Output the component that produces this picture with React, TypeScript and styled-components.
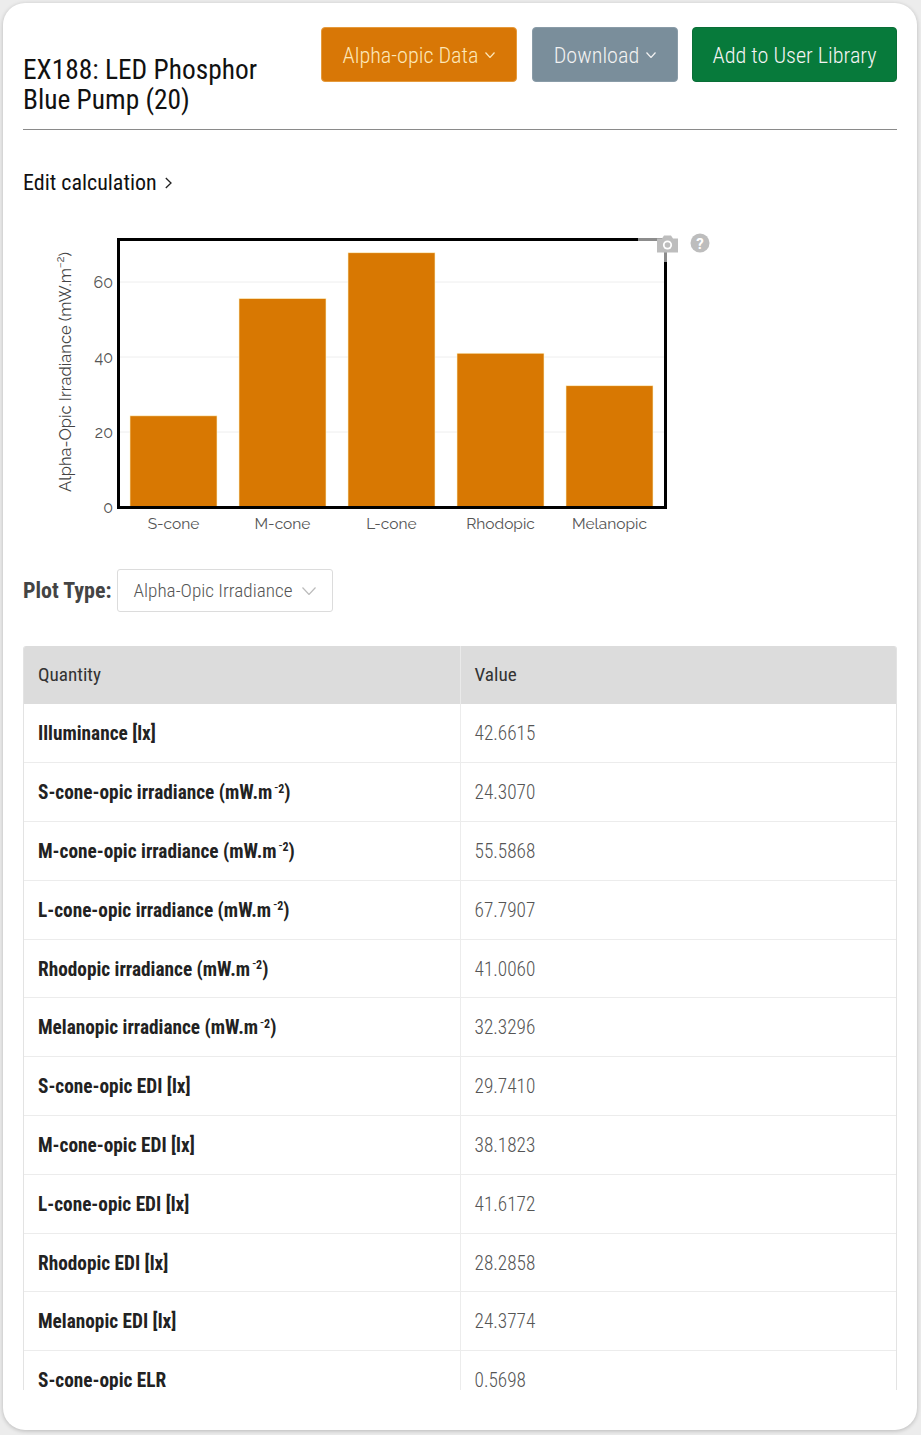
import React from "react";
import styled, { createGlobalStyle } from "styled-components";

const COND = `"Roboto Condensed", Roboto, "Liberation Sans Narrow", sans-serif`;
const CHART = `Raleway, Lato, "Open Sans", sans-serif`;

const Global = createGlobalStyle`
  html, body { margin: 0; padding: 0; background: #ececec; }
  body { font-family: ${COND}; }
  * { box-sizing: border-box; }
`;

const Card = styled.div`
  margin: 3px 4px 5px 3px;
  background: #fff;
  border-radius: 22px;
  box-shadow: 0 1px 4px rgba(0, 0, 0, 0.22);
  padding: 24px 20px 40px;
`;

const Header = styled.div`
  display: flex;
  justify-content: space-between;
  align-items: flex-start;
  height: 88px;
`;

const Title = styled.h1`
  margin: 28px 0 0;
  font-size: 27.4px;
  line-height: 30px;
  font-weight: 400;
  color: #111;
  width: 275px;
`;

const Buttons = styled.div`
  display: flex;
  gap: 14px;
`;

const Btn = styled.button<{ $bg: string; $fg: string; $w: number; $edge: string; $lead?: number }>`
  width: ${(p) => p.$w}px;
  height: 55px;
  margin-left: ${(p) => p.$lead ?? 0}px;
  border-radius: 4px;
  border: 1px solid ${(p) => p.$edge};
  background: ${(p) => p.$bg};
  color: ${(p) => p.$fg};
  font-family: ${COND};
  font-weight: 300;
  font-size: 22.2px;
  display: flex;
  align-items: center;
  justify-content: center;
  gap: 7px;
  padding: 0;
  cursor: pointer;
`;

const Divider = styled.hr`
  margin: 14px 0 0;
  border: 0;
  border-top: 1px solid #8a8a8a;
`;

const EditLink = styled.div`
  margin-top: 41px;
  font-size: 22px;
  line-height: 24px;
  color: #111;
  display: flex;
  align-items: center;
  gap: 8px;
`;

const ChartSvg = styled.svg`
  display: block;
  margin-top: 30px;
`;

const PlotRow = styled.div`
  margin-top: 24px;
  display: flex;
  align-items: center;
  gap: 6px;
`;

const PlotLabel = styled.span`
  font-weight: 700;
  font-size: 22px;
  color: #444;
`;

const Select = styled.div`
  width: 216px;
  height: 43px;
  border: 1px solid #dcdcdc;
  border-radius: 3px;
  display: flex;
  align-items: center;
  justify-content: space-between;
  padding: 0 16px 0 15px;
  font-size: 19.2px;
  font-weight: 300;
  color: #555;
`;

const TableWrap = styled.div`
  margin-top: 34px;
  height: 744px;
  overflow: hidden;
  border-left: 1px solid #e3e3e3;
  border-right: 1px solid #e3e3e3;
  border-radius: 3px 3px 0 0;
`;

const Table = styled.table`
  width: 100%;
  border-collapse: collapse;
  table-layout: fixed;
`;

const Th = styled.th`
  background: #dcdcdc;
  height: 58px;
  padding: 0 14px 2px;
  text-align: left;
  font-weight: 400;
  font-size: 19.2px;
  color: #333;
  & + & { border-left: 1px solid #eaeaea; }
`;

const Td = styled.td<{ $bold?: boolean }>`
  height: 58.8px;
  padding: 1px 14px 0;
  border-bottom: 1px solid #ececec;
  font-size: 19.3px;
  font-weight: ${(p) => (p.$bold ? 700 : 300)};
  color: ${(p) => (p.$bold ? "#222" : "#555")};
  & + & { border-left: 1px solid #ececec; }
`;

const Chevron = ({ color, w = 10, h = 6 }: { color: string; w?: number; h?: number }) => (
  <svg width={w} height={h} viewBox={`0 0 ${w} ${h}`}>
    <polyline points={`0.5,0.5 ${w / 2},${h - 0.5} ${w - 0.5},0.5`} fill="none" stroke={color} strokeWidth="1.2" />
  </svg>
);

const RightChevron = () => (
  <svg width="7" height="12" viewBox="0 0 7 12">
    <polyline points="0.8,1 6,6 0.8,11" fill="none" stroke="#222" strokeWidth="1.3" />
  </svg>
);

const bars = [
  { name: "S-cone", v: 24.307 },
  { name: "M-cone", v: 55.5868 },
  { name: "L-cone", v: 67.7907 },
  { name: "Rhodopic", v: 41.006 },
  { name: "Melanopic", v: 32.3296 },
];

const Y0 = 282;
const K = 3.75;

const Chart = () => (
  <ChartSvg width="700" height="320" viewBox="0 0 700 320">
    {[20, 40, 60].map((t) => (
      <line key={t} x1="96" x2="642" y1={Y0 - t * K} y2={Y0 - t * K} stroke="#eeeeee" strokeWidth="1" />
    ))}
    {bars.map((b, i) => {
      const x = 107 + i * 109;
      const h = b.v * K;
      return (
        <g key={b.name}>
          <rect x={x} y={Y0 - h} width="87" height={h} fill="#d87802" stroke="#fff3c8" strokeWidth="0.6" />
          <text x={x + 43.5} y="304" textAnchor="middle" fontFamily={CHART} fontWeight="400" fontSize="15.5" fill="#555">
            {b.name}
          </text>
        </g>
      );
    })}
    {[0, 20, 40, 60].map((t) => (
      <text key={t} x="90" y={Y0 - t * K + 5.5} textAnchor="end" fontFamily={CHART} fontWeight="400" fontSize="16" fill="#555">
        {t}
      </text>
    ))}
    <text
      transform="translate(48 147) rotate(-90)"
      textAnchor="middle"
      fontFamily={CHART}
      fontWeight="400"
      fontSize="16.5"
      fill="#444"
    >
      Alpha-Opic Irradiance (mW.m
      <tspan dy="-7" fontSize="11">−2</tspan>
      <tspan dy="7">)</tspan>
    </text>
    <rect x="95.5" y="14.5" width="547" height="268" fill="none" stroke="#000" strokeWidth="3" />
    <rect x="615" y="0" width="100" height="37" fill="rgba(255,255,255,0.55)" />
    <g fill="#bdbdbd">
      <path d="M634 13.5 h5 l2 -3 h7 l2 3 h5 v14 h-21 z" />
      <circle cx="644.5" cy="20" r="4.6" fill="#fff" />
      <circle cx="644.5" cy="20" r="2.8" fill="#bdbdbd" />
      <circle cx="677" cy="18" r="9.5" />
    </g>
    <text x="677" y="23.5" textAnchor="middle" fontFamily="Roboto, sans-serif" fontWeight="700" fontSize="15" fill="#fff">
      ?
    </text>
  </ChartSvg>
);

const Sup = styled.sup`
  font-size: 0.62em;
  vertical-align: 0.55em;
  line-height: 0;
  margin-left: 2px;
`;

const unit = (
  <>
    (mW.m<Sup>⁻2</Sup>)
  </>
);

const rows: { q: React.ReactNode; v: string }[] = [
  { q: "Illuminance [lx]", v: "42.6615" },
  { q: <>S-cone-opic irradiance {unit}</>, v: "24.3070" },
  { q: <>M-cone-opic irradiance {unit}</>, v: "55.5868" },
  { q: <>L-cone-opic irradiance {unit}</>, v: "67.7907" },
  { q: <>Rhodopic irradiance {unit}</>, v: "41.0060" },
  { q: <>Melanopic irradiance {unit}</>, v: "32.3296" },
  { q: "S-cone-opic EDI [lx]", v: "29.7410" },
  { q: "M-cone-opic EDI [lx]", v: "38.1823" },
  { q: "L-cone-opic EDI [lx]", v: "41.6172" },
  { q: "Rhodopic EDI [lx]", v: "28.2858" },
  { q: "Melanopic EDI [lx]", v: "24.3774" },
  { q: "S-cone-opic ELR", v: "0.5698" },
];

export default function App() {
  return (
    <>
      <Global />
      <Card>
        <Header>
          <Title>EX188: LED Phosphor Blue Pump (20)</Title>
          <Buttons>
            <Btn $bg="#d87706" $fg="#fde7b8" $edge="#e59a3c" $w={196}>
              Alpha-opic Data <Chevron color="#fde7b8" />
            </Btn>
            <Btn $bg="#7a8e9b" $fg="#f2f2f2" $edge="#8a9ca8" $w={146} $lead={1}>
              Download <Chevron color="#f2f2f2" />
            </Btn>
            <Btn $bg="#077a3b" $fg="#f4f4f4" $edge="#0a6e37" $w={205}>
              Add to User Library
            </Btn>
          </Buttons>
        </Header>
        <Divider />
        <EditLink>
          Edit calculation <RightChevron />
        </EditLink>
        <Chart />
        <PlotRow>
          <PlotLabel>Plot Type:</PlotLabel>
          <Select>
            Alpha-Opic Irradiance <Chevron color="#bbb" w={14} h={8} />
          </Select>
        </PlotRow>
        <TableWrap>
          <Table>
            <thead>
              <tr>
                <Th>Quantity</Th>
                <Th>Value</Th>
              </tr>
            </thead>
            <tbody>
              {rows.map((r, i) => (
                <tr key={i}>
                  <Td $bold>{r.q}</Td>
                  <Td>{r.v}</Td>
                </tr>
              ))}
            </tbody>
          </Table>
        </TableWrap>
      </Card>
    </>
  );
}
